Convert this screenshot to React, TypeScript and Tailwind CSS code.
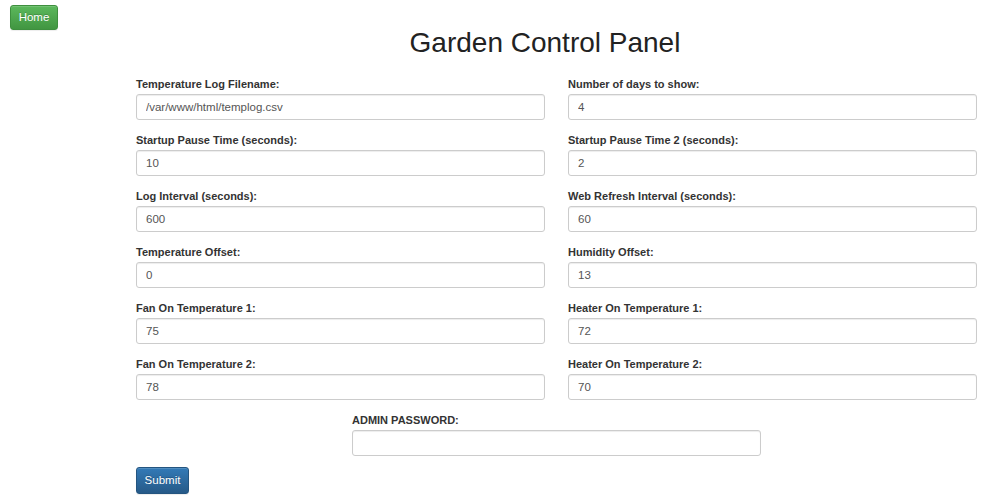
import React from 'react';

type Field = { label: string; value: string };

const fields: Field[] = [
  { label: 'Temperature Log Filename:', value: '/var/www/html/templog.csv' },
  { label: 'Number of days to show:', value: '4' },
  { label: 'Startup Pause Time (seconds):', value: '10' },
  { label: 'Startup Pause Time 2 (seconds):', value: '2' },
  { label: 'Log Interval (seconds):', value: '600' },
  { label: 'Web Refresh Interval (seconds):', value: '60' },
  { label: 'Temperature Offset:', value: '0' },
  { label: 'Humidity Offset:', value: '13' },
  { label: 'Fan On Temperature 1:', value: '75' },
  { label: 'Heater On Temperature 1:', value: '72' },
  { label: 'Fan On Temperature 2:', value: '78' },
  { label: 'Heater On Temperature 2:', value: '70' },
];

const FormField = ({ label, value, type = 'text', className = '' }: Field & { type?: string; className?: string }) => (
  <div className={`flex flex-col ${className}`}>
    <label className="block h-[16px] leading-[16px] mb-[2px] text-[11px] font-bold text-[#333]">{label}</label>
    <input
      type={type}
      defaultValue={value}
      className="h-[26px] w-full px-[9px] text-[11.5px] text-[#555] bg-white border border-[#ccc] rounded-[3px] shadow-[inset_0_1px_1px_rgba(0,0,0,0.075)] outline-none"
    />
  </div>
);

export default function App() {
  return (
    <div className="min-h-screen bg-white text-[#333] font-['Liberation_Sans',Arial,sans-serif]">
      <div className="flex items-start">
        <div className="w-[90px] shrink-0">
          <button className="mt-[5px] ml-[10px] w-[48px] h-[25px] text-[11.5px] text-white rounded-[3px] border border-[#3e8f3e] bg-gradient-to-b from-[#5cb85c] to-[#419641] shadow-[inset_0_1px_0_rgba(255,255,255,0.15),0_1px_1px_rgba(0,0,0,0.075)] [text-shadow:0_-1px_0_rgba(0,0,0,0.2)]">
            Home
          </button>
        </div>
        <h1 className="flex-1 mt-[29px] text-center text-[28px] leading-[28px] font-normal text-[#222]">
          Garden Control Panel
        </h1>
      </div>

      <form className="ml-[136px] mt-[19px] w-[841px]">
        <div className="grid grid-cols-[409px_409px] gap-x-[23px] gap-y-[12px]">
          {fields.map((f) => (
            <FormField key={f.label} label={f.label} value={f.value} />
          ))}
          <FormField
            label="ADMIN PASSWORD:"
            value=""
            type="password"
            className="col-span-2 justify-self-center w-[409px]"
          />
        </div>
        <button
          type="button"
          className="mt-[11px] w-[53px] h-[27px] text-[11.5px] text-white rounded-[3px] border border-[#245580] bg-gradient-to-b from-[#337ab7] to-[#265a88] shadow-[inset_0_1px_0_rgba(255,255,255,0.15),0_1px_1px_rgba(0,0,0,0.075)] [text-shadow:0_-1px_0_rgba(0,0,0,0.2)]"
        >
          Submit
        </button>
      </form>
    </div>
  );
}
